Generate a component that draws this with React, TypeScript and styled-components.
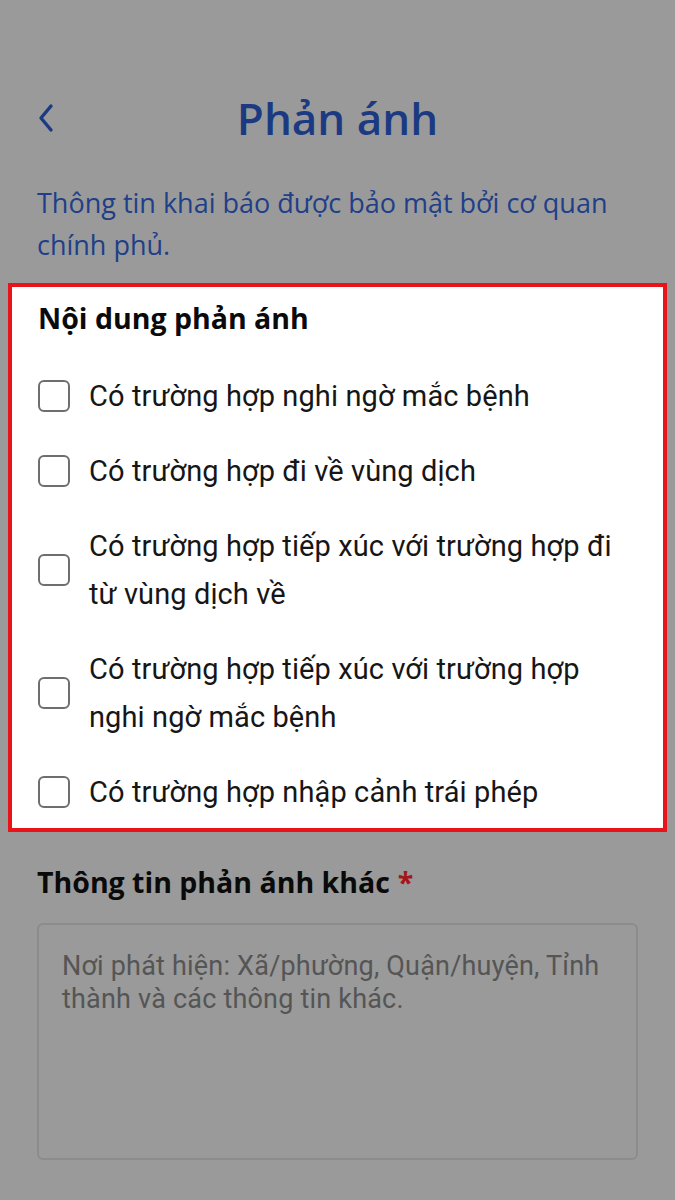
import * as React from 'react'
import styled, { createGlobalStyle } from 'styled-components'

const GlobalStyle = createGlobalStyle`
  html, body {
    margin: 0;
    padding: 0;
    background: #9a9a9a;
  }
  * {
    box-sizing: border-box;
  }
`

const Page = styled.div`
  width: 675px;
  min-height: 1200px;
  background: #9a9a9a;
  font-family: 'Open Sans', 'Noto Sans', sans-serif;
  padding-top: 88px;
  padding-bottom: 40px;
`

const Header = styled.header`
  display: grid;
  grid-template-columns: 1fr auto 1fr;
  align-items: center;
  height: 60px;
  padding: 0 37px;
`

const BackButton = styled.button`
  justify-self: start;
  display: flex;
  align-items: center;
  background: none;
  border: 0;
  padding: 0;
  color: #1b3a82;
  cursor: pointer;
`

const Title = styled.h1`
  margin: 0;
  font-size: 44px;
  font-weight: 600;
  line-height: 60px;
  color: #1b3a82;
`

const Notice = styled.p`
  margin: 34px 37px 17px;
  font-size: 27px;
  line-height: 42px;
  color: #203f88;
`

const Highlight = styled.section`
  margin: 0 8px;
  border: 4px solid #e8141a;
  background: #ffffff;
  padding: 11px 26px 12px 26px;
`

const SectionTitle = styled.h2`
  margin: 0;
  font-size: 28.5px;
  font-weight: 700;
  line-height: 40px;
  color: #0a0a0a;
`

const OptionList = styled.div`
  display: flex;
  flex-direction: column;
  gap: 27px;
  margin-top: 34px;
`

const Option = styled.label`
  display: flex;
  align-items: center;
  gap: 19px;
  cursor: pointer;
`

const Box = styled.span`
  flex: 0 0 auto;
  width: 32px;
  height: 32px;
  border: 2px solid #6e6e6e;
  border-radius: 6px;
  background: #fff;
`

const OptionText = styled.span`
  font-family: Roboto, 'Liberation Sans', sans-serif;
  font-size: 29px;
  line-height: 48px;
  color: #161616;
  letter-spacing: 0.1px;
`

const Field = styled.div`
  padding: 30px 37px 0;
`

const Required = styled.span`
  color: #a3161a;
  margin-left: 8px;
`

const TextArea = styled.textarea`
  display: block;
  width: 100%;
  height: 237px;
  margin-top: 21px;
  padding: 25px 18px 0 23px;
  border: 2px solid #8c8c8c;
  border-radius: 6px;
  background: transparent;
  resize: none;
  font-family: Roboto, 'Liberation Sans', sans-serif;
  font-size: 27px;
  line-height: 33px;
  letter-spacing: 0.2px;
  color: #222;
  outline: none;

  &::placeholder {
    color: #555555;
  }
`

const options = [
  'Có trường hợp nghi ngờ mắc bệnh',
  'Có trường hợp đi về vùng dịch',
  'Có trường hợp tiếp xúc với trường hợp đi từ vùng dịch về',
  'Có trường hợp tiếp xúc với trường hợp nghi ngờ mắc bệnh',
  'Có trường hợp nhập cảnh trái phép',
]

const ChevronLeft = () => (
  <svg width='18' height='30' viewBox='0 0 18 30' fill='none'>
    <path
      d='M14 3 L4 15 L14 27'
      stroke='currentColor'
      strokeWidth='3.4'
      strokeLinecap='round'
      strokeLinejoin='round'
    />
  </svg>
)

const App = () => (
  <Page>
    <GlobalStyle />
    <Header>
      <BackButton aria-label='Quay lại'>
        <ChevronLeft />
      </BackButton>
      <Title>Phản ánh</Title>
      <span />
    </Header>

    <Notice>Thông tin khai báo được bảo mật bởi cơ quan chính phủ.</Notice>

    <Highlight>
      <SectionTitle>Nội dung phản ánh</SectionTitle>
      <OptionList>
        {options.map((text) => (
          <Option key={text}>
            <Box />
            <OptionText>{text}</OptionText>
          </Option>
        ))}
      </OptionList>
    </Highlight>

    <Field>
      <SectionTitle>
        Thông tin phản ánh khác<Required>*</Required>
      </SectionTitle>
      <TextArea placeholder='Nơi phát hiện: Xã/phường, Quận/huyện, Tỉnh thành và các thông tin khác.' />
    </Field>
  </Page>
)

export default App
